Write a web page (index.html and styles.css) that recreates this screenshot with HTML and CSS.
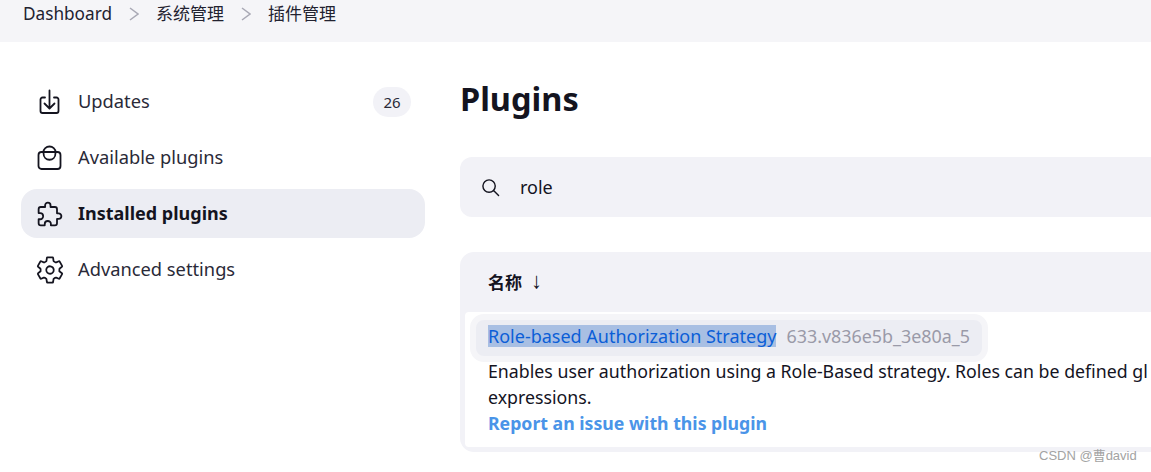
FILE: index.html
```html
<!DOCTYPE html>
<html lang="zh-CN">
<head>
    <meta charset="UTF-8">
    <title>Plugins</title>
    <link rel="stylesheet" href="styles.css">
</head>
<body>
    <div class="breadcrumbs">
        <span class="crumb-en">Dashboard</span>
        <svg class="crumb-sep" viewBox="0 0 10 14"><path d="M1 1 9 7l-8 6"/></svg>
        <span>系统管理</span>
        <svg class="crumb-sep" viewBox="0 0 10 14"><path d="M1 1 9 7l-8 6"/></svg>
        <span>插件管理</span>
    </div>

    <div class="page">
        <div class="sidebar">
            <div class="side-item">
                <svg class="side-icon" viewBox="0 0 25 25">
                    <path d="M8 8.500H5.500a2 2 0 0 0-2 2V22a2 2 0 0 0 2 2h14a2 2 0 0 0 2-2V10.500a2 2 0 0 0-2-2H17"/>
                    <path d="M12.500 1.500V19M7.500 14.500l5 5 5-5"/>
                </svg>
                <span class="side-label">Updates</span>
                <span class="badge">26</span>
            </div>
            <div class="side-item">
                <svg class="side-icon" viewBox="0 0 25 25">
                    <rect x="1.500" y="7" width="22" height="17" rx="3"/>
                    <path d="M6.500 7a6 5.500 0 0 1 12 0M6.500 8c0 9 12 9 12 0"/>
                </svg>
                <span class="side-label">Available plugins</span>
            </div>
            <div class="side-item active">
                <svg class="side-icon puzzle" viewBox="0 0 512 512">
                    <path d="M413.66 246.1H386a2 2 0 01-2-2v-77.24A38.86 38.86 0 00345.14 128H267.9a2 2 0 01-2-2V98.34c0-27.14-21.5-49.86-48.64-50.33a49.53 49.53 0 00-50.4 49.51V126a2 2 0 01-2 2H87.62A39.74 39.74 0 0048 167.62V238a2 2 0 002 2h26.91c29.37 0 53.68 25.48 54.09 54.85.42 29.87-23.51 57.15-53.29 57.15H50a2 2 0 00-2 2v70.38A39.74 39.74 0 0087.62 464H158a2 2 0 002-2v-20.93c0-30.28 24.75-56.35 55-57.06 30.1-.7 57 20.31 57 50.28V462a2 2 0 002 2h71.14A38.86 38.86 0 00384 425.14v-78a2 2 0 012-2h28.48c27.63 0 49.52-22.67 49.52-50.4s-23.2-48.64-50.34-48.64z"/>
                </svg>
                <span class="side-label">Installed plugins</span>
            </div>
            <div class="side-item">
                <svg class="side-icon gear" viewBox="0 0 512 512">
                    <path d="M262.29 192.31a64 64 0 1057.4 57.4 64.13 64.13 0 00-57.4-57.4zM416.39 256a154.34 154.34 0 01-1.53 20.79l45.21 35.46a10.81 10.81 0 012.45 13.75l-42.77 74a10.81 10.81 0 01-13.14 4.59l-44.9-18.08a16.11 16.11 0 00-15.17 1.75A164.48 164.48 0 01325 400.8a15.94 15.94 0 00-8.82 12.14l-6.73 47.89a11.08 11.08 0 01-10.68 9.17h-85.54a11.11 11.11 0 01-10.69-8.87l-6.72-47.82a16.07 16.07 0 00-9-12.22 155.3 155.3 0 01-21.46-12.57 16 16 0 00-15.11-1.71l-44.89 18.07a10.81 10.81 0 01-13.14-4.58l-42.77-74a10.8 10.8 0 012.45-13.75l38.21-30a16.05 16.05 0 006-14.08c-.36-4.17-.58-8.33-.58-12.5s.21-8.27.58-12.35a16 16 0 00-6.07-13.94l-38.19-30A10.81 10.81 0 0149.48 186l42.77-74a10.81 10.81 0 0113.14-4.59l44.9 18.08a16.11 16.11 0 0015.17-1.75A164.48 164.48 0 01187 111.2a15.94 15.94 0 008.82-12.14l6.73-47.89A11.08 11.08 0 01213.23 42h85.54a11.11 11.11 0 0110.69 8.87l6.72 47.82a16.07 16.07 0 009 12.22 155.3 155.3 0 0121.46 12.57 16 16 0 0015.11 1.71l44.89-18.07a10.81 10.81 0 0113.14 4.58l42.77 74a10.8 10.8 0 01-2.45 13.75l-38.21 30a16.05 16.05 0 00-6.05 14.08c.33 4.14.55 8.3.55 12.47z"/>
                </svg>
                <span class="side-label">Advanced settings</span>
            </div>
        </div>

        <div class="content">
            <h1>Plugins</h1>
            <div class="search">
                <svg class="search-icon" viewBox="0 0 20 20">
                    <circle cx="8.500" cy="8.500" r="6.500"/>
                    <path d="m13.500 13.500 5 5"/>
                </svg>
                <span>role</span>
            </div>
            <div class="plugin-table">
                <div class="table-head">
                    <b>名称</b>
                    <span class="sort-arrow">↓</span>
                </div>
                <div class="table-row">
                    <div class="plugin-title">
                        <span class="plugin-name">Role-based Authorization Strategy</span>
                        <span class="plugin-version">633.v836e5b_3e80a_5</span>
                    </div>
                    <div class="plugin-desc">Enables user authorization using a Role-Based strategy. Roles can be defined gl<br>expressions.</div>
                    <div class="plugin-report">Report an issue with this plugin</div>
                </div>
            </div>
        </div>
    </div>

    <div class="watermark">CSDN @曹david</div>
</body>
</html>
```

FILE: styles.css
```css
* {
    margin: 0;
    padding: 0;
    box-sizing: border-box;
}

body {
    font-family: "Noto Sans", "Noto Sans CJK SC", sans-serif;
    color: #14141f;
    background: #fff;
    width: 1151px;
    height: 472px;
    overflow: hidden;
    position: relative;
}

.breadcrumbs {
    height: 42px;
    background: #f5f5f8;
    display: flex;
    align-items: flex-start;
    gap: 17px;
    padding: 4px 0 0 23px;
    font-size: 17px;
    line-height: 20px;
    color: #222230;
}

.crumb-en {
    font-size: 17.200px;
}

.crumb-sep {
    width: 10px;
    height: 14px;
    margin-top: 3px;
    fill: none;
    stroke: #a9a9b5;
    stroke-width: 1.500;
}

.page {
    display: flex;
}

.sidebar {
    width: 404px;
    margin: 35px 0 0 21px;
    flex: none;
    display: flex;
    flex-direction: column;
    gap: 7px;
}

.side-item {
    height: 49px;
    display: flex;
    align-items: center;
    gap: 16px;
    padding: 0 14px 0 16px;
    border-radius: 16px;
    font-size: 18.300px;
    color: #2a2a38;
}

.side-label {
    margin-bottom: 2px;
}

.side-item.active {
    background: #ecedf3;
    font-size: 18px;
    font-weight: 700;
    color: #14141f;
}

.side-icon {
    width: 25px;
    height: 25px;
    flex: none;
    fill: none;
    stroke: #14141f;
    stroke-width: 1.800;
    stroke-linecap: round;
    stroke-linejoin: round;
}

.puzzle {
    width: 28px;
    height: 28px;
    margin: 0 -2px 0 -1px;
    stroke-width: 33;
}

.gear {
    width: 30px;
    height: 30px;
    margin: 0 -3px 0 -2px;
    stroke-width: 30;
}

.badge {
    margin-left: auto;
    width: 38px;
    height: 30px;
    border-radius: 15px;
    background: #f2f2f7;
    font-size: 15px;
    display: flex;
    align-items: center;
    justify-content: center;
}

.content {
    margin-left: 35px;
    flex: 1;
    min-width: 0;
    white-space: nowrap;
}

h1 {
    font-size: 32.500px;
    line-height: 40px;
    font-weight: 700;
    margin-top: 37px;
}

.search {
    margin-top: 38px;
    height: 60px;
    background: #f2f2f7;
    border-radius: 12px 0 0 12px;
    display: flex;
    align-items: center;
    gap: 20px;
    padding-left: 21px;
    font-size: 18px;
}

.search-icon {
    width: 19px;
    height: 19px;
    fill: none;
    stroke: #14141f;
    stroke-width: 1.500;
    stroke-linecap: round;
}

.plugin-table {
    margin-top: 35px;
    background: #f2f2f7;
    border-radius: 14px 0 0 14px;
    padding: 0 0 5px 5px;
}

.table-head {
    height: 60px;
    padding: 0 0 2px 23px;
    display: flex;
    align-items: center;
    gap: 9px;
    font-size: 16px;
    color: #14141f;
}

.table-head b {
    font-size: 17px;
}

.sort-arrow {
    font-family: "Liberation Sans", sans-serif;
    font-size: 22px;
}

.table-row {
    background: #fff;
    border-radius: 4px 0 0 4px;
    height: 135px;
    padding: 2px 0 0 5px;
    overflow: hidden;
}

.plugin-title {
    display: inline-flex;
    align-items: center;
    height: 48px;
    padding: 0 12px 0 12px;
    background: #ecedf3;
    border: 6px solid #f5f5f8;
    border-radius: 14px;
    font-size: 18px;
    gap: 10px;
    margin-bottom: -4px;
}

.plugin-name,
.plugin-version {
    margin-bottom: 4px;
}

.plugin-name {
    background: #a8bfe3;
    color: #0b5ed7;
    line-height: 22px;
}

.plugin-version {
    font-size: 17.900px;
    color: #9a9aa8;
}

.plugin-desc {
    font-size: 17.750px;
    line-height: 26px;
    padding-left: 18px;
    color: #14141f;
}

.plugin-report {
    font-size: 17.700px;
    line-height: 26px;
    font-weight: 700;
    padding-left: 18px;
    color: #4a94e8;
}

.watermark {
    position: absolute;
    left: 1039px;
    top: 448px;
    font-family: "Liberation Sans", "Noto Sans CJK SC", sans-serif;
    font-size: 13px;
    line-height: 15px;
    color: #a3a3a3;
}
```
